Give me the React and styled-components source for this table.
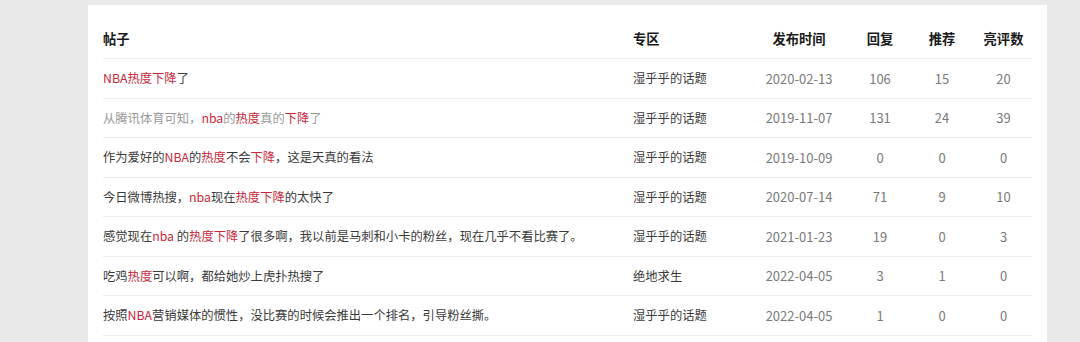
import React from 'react';
import styled, { createGlobalStyle } from 'styled-components';

const GlobalStyle = createGlobalStyle`
  body {
    margin: 0;
    background: #e9e9e9;
    font-family: "Noto Sans CJK SC", "Noto Sans", sans-serif;
  }
`;

const Page = styled.div`
  padding: 5px 0 0 88px;
  height: 342px;
  overflow: hidden;
  box-sizing: border-box;
`;

const Panel = styled.section`
  width: 959px;
  min-height: 400px;
  background: #fff;
  padding: 14px 15px 0;
  box-sizing: border-box;
`;

const Row = styled.div`
  display: grid;
  grid-template-columns: 530px 122px 88px 74px 50px 1fr;
  align-items: center;
  height: ${p => (p.$head ? '39px' : '38.5px')};
  border-bottom: 1px solid #ececec;
  font-size: 12.3px;
  color: #3a3a3a;
`;

const HeadCell = styled.div`
  font-size: 13.3px;
  font-weight: 700;
  color: #1a1a1a;
  text-align: ${p => (p.$center ? 'center' : 'left')};
  padding-left: ${p => (p.$last ? '8px' : '0')};
`;

const Title = styled.div`
  color: ${p => (p.$visited ? '#999' : '#3a3a3a')};
  white-space: nowrap;
`;

const Hot = styled.span`
  color: #c9273a;
`;

const Zone = styled.div`
  color: #3a3a3a;
`;

const Num = styled.div`
  text-align: center;
  font-size: 13px;
  color: #7a7a7a;
  padding-left: ${p => (p.$last ? '8px' : '0')};
`;

const rows = [
  { parts: [['NBA热度下降', 1], ['了', 0]], zone: '湿乎乎的话题', date: '2020-02-13', reply: 106, rec: 15, light: 20 },
  {
    visited: true,
    parts: [['从腾讯体育可知，', 0], ['nba', 1], ['的', 0], ['热度', 1], ['真的', 0], ['下降', 1], ['了', 0]],
    zone: '湿乎乎的话题', date: '2019-11-07', reply: 131, rec: 24, light: 39,
  },
  {
    parts: [['作为爱好的', 0], ['NBA', 1], ['的', 0], ['热度', 1], ['不会', 0], ['下降', 1], ['，这是天真的看法', 0]],
    zone: '湿乎乎的话题', date: '2019-10-09', reply: 0, rec: 0, light: 0,
  },
  {
    parts: [['今日微博热搜，', 0], ['nba', 1], ['现在', 0], ['热度下降', 1], ['的太快了', 0]],
    zone: '湿乎乎的话题', date: '2020-07-14', reply: 71, rec: 9, light: 10,
  },
  {
    parts: [['感觉现在', 0], ['nba', 1], [' 的', 0], ['热度下降', 1], ['了很多啊，我以前是马刺和小卡的粉丝，现在几乎不看比赛了。', 0]],
    zone: '湿乎乎的话题', date: '2021-01-23', reply: 19, rec: 0, light: 3,
  },
  {
    parts: [['吃鸡', 0], ['热度', 1], ['可以啊，都给她炒上虎扑热搜了', 0]],
    zone: '绝地求生', date: '2022-04-05', reply: 3, rec: 1, light: 0,
  },
  {
    parts: [['按照', 0], ['NBA', 1], ['营销媒体的惯性，没比赛的时候会推出一个排名，引导粉丝撕。', 0]],
    zone: '湿乎乎的话题', date: '2022-04-05', reply: 1, rec: 0, light: 0,
  },
];

export default function App() {
  return (
    <>
      <GlobalStyle />
      <Page>
        <Panel>
          <Row $head>
            <HeadCell>帖子</HeadCell>
            <HeadCell>专区</HeadCell>
            <HeadCell $center>发布时间</HeadCell>
            <HeadCell $center>回复</HeadCell>
            <HeadCell $center>推荐</HeadCell>
            <HeadCell $center $last>亮评数</HeadCell>
          </Row>
          {rows.map((r, i) => (
            <Row key={i}>
              <Title $visited={r.visited}>
                {r.parts.map(([t, hot], j) => (hot ? <Hot key={j}>{t}</Hot> : <span key={j}>{t}</span>))}
              </Title>
              <Zone>{r.zone}</Zone>
              <Num>{r.date}</Num>
              <Num>{r.reply}</Num>
              <Num>{r.rec}</Num>
              <Num $last>{r.light}</Num>
            </Row>
          ))}
        </Panel>
      </Page>
    </>
  );
}
